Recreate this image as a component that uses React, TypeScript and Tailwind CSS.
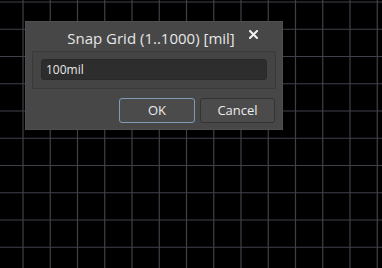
import React from "react";

const STEP = 27.25;
const xs = Array.from({ length: 14 }, (_, i) => 23 + i * STEP);
const ys = Array.from({ length: 10 }, (_, i) => 2 + i * STEP);

function Grid() {
  return (
    <svg width="382" height="268" className="absolute inset-0">
      {xs.map((x, i) => (
        <line key={"x" + i} x1={x} y1={0} x2={x} y2={268} stroke="#40404b" strokeWidth={1.2} />
      ))}
      {ys.map((y, i) => (
        <line key={"y" + i} x1={0} y1={y} x2={382} y2={y} stroke="#40404b" strokeWidth={1.2} />
      ))}
    </svg>
  );
}

export default function App() {
  return (
    <div
      className="relative w-[382px] h-[268px] overflow-hidden bg-black"
      style={{ fontFamily: '"Open Sans", "Noto Sans", sans-serif' }}
    >
      <Grid />

      {/* Snap grid dialog */}
      <div className="absolute left-[25px] top-[21px] w-[258px] h-[109px] bg-[#474747] border border-[#4f4f4f] flex flex-col">
        <div className="relative h-[29px] flex items-center justify-center">
          <span className="text-[15px] text-[#e6e6e6] mt-[3px] pr-[6px]">Snap Grid (1..1000) [mil]</span>
          <svg width="9" height="9" viewBox="0 0 9 9" className="absolute right-[24px] top-[8px]">
            <path d="M1 1 L8 8 M8 1 L1 8" stroke="#f2f2f2" strokeWidth="2" strokeLinecap="square" />
          </svg>
        </div>
        <div className="mx-[6px] border border-[#3a3a3a] bg-[#444444] pl-[8px] pr-[8px] pt-[7px] pb-[8px]">
          <div className="h-[21px] rounded-[3px] bg-[#2d2d2d] border border-[#292929] flex items-center pl-[4px]">
            <span className="text-[12px] text-[#e8e8e8]">100mil</span>
          </div>
        </div>
        <div className="flex justify-end gap-[5px] mt-[9px] pr-[7px]">
          <button className="w-[76px] h-[25px] rounded-[3px] bg-[#4b4b4b] border border-[#7f9cb8] text-[13px] text-[#ececec]">
            OK
          </button>
          <button className="w-[75px] h-[25px] rounded-[3px] bg-[#4b4b4b] border border-[#333333] text-[13px] text-[#ececec]">
            Cancel
          </button>
        </div>
      </div>
    </div>
  );
}
